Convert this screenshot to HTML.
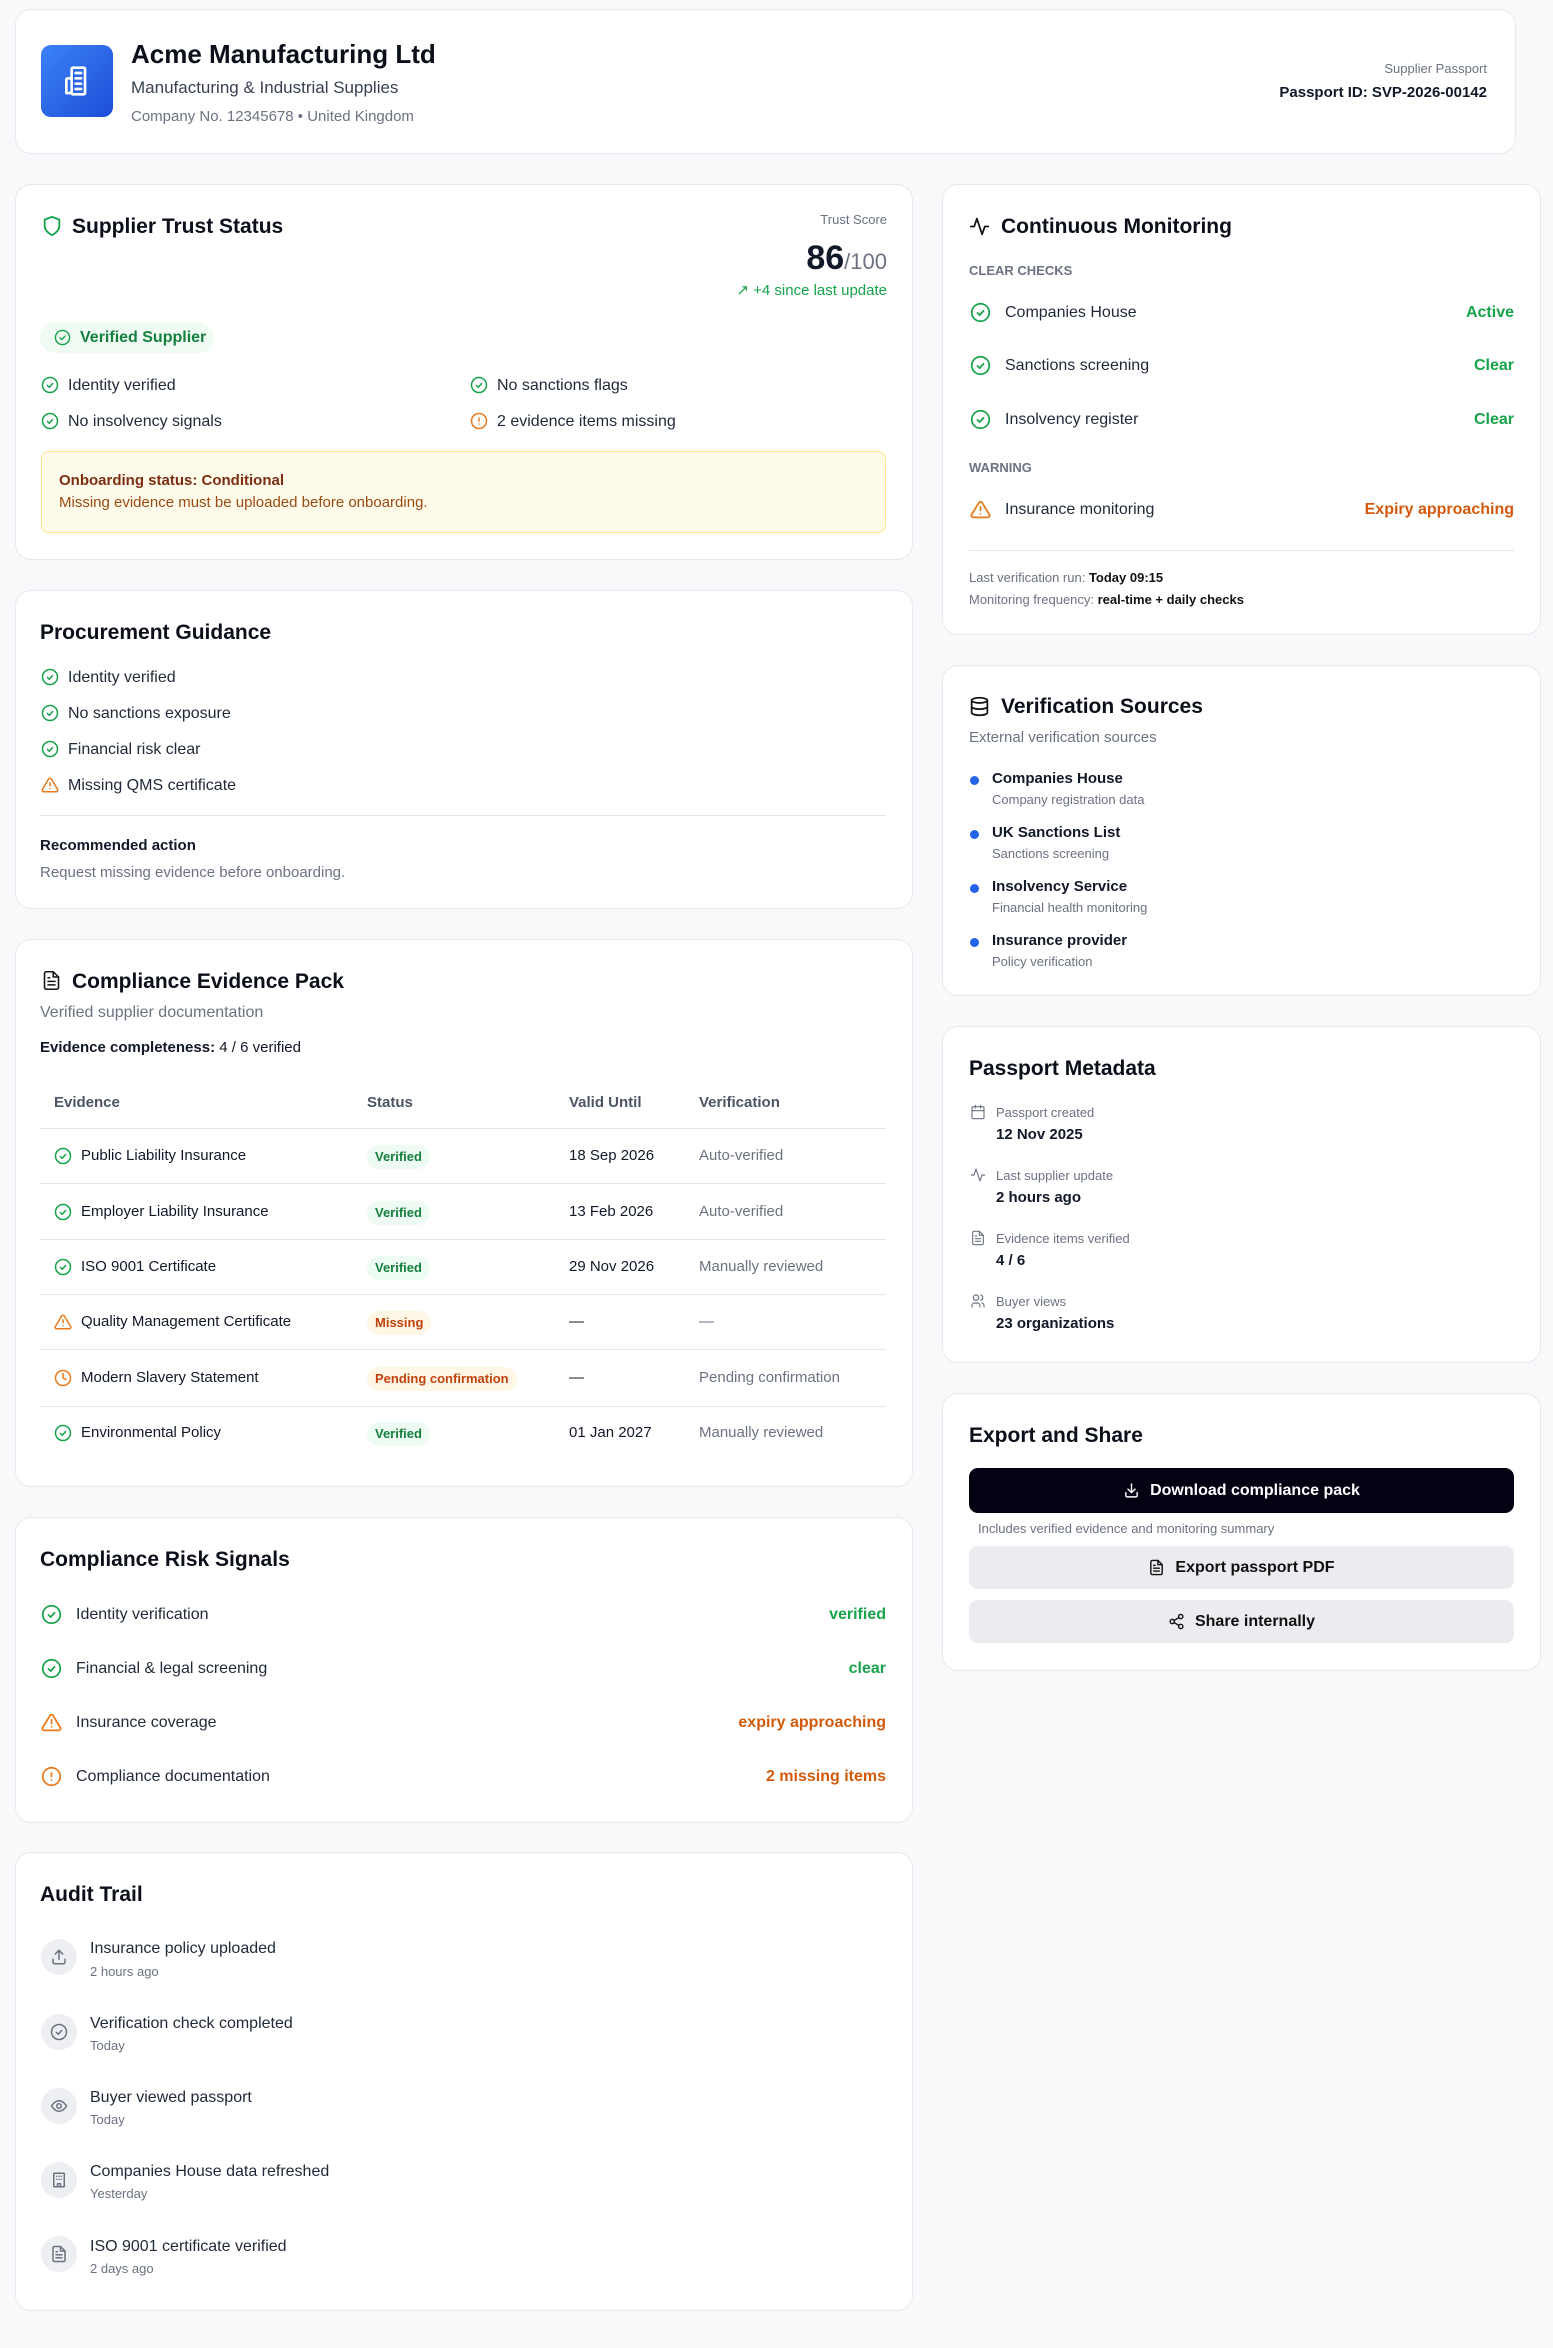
<!DOCTYPE html>
<html><head><meta charset="utf-8"><style>
*{box-sizing:border-box;margin:0;padding:0}
body{width:1553px;height:2348px;background:#f8f9fb;font-family:"Liberation Sans",sans-serif;color:#111827;position:relative;overflow:hidden}
.card{position:absolute;background:#fff;border:1px solid #e7e9ee;border-radius:16px}
.a{position:absolute;white-space:nowrap;line-height:1.2}
.h{font-size:21px;font-weight:700;color:#0b0f19}
.b{font-size:16px;color:#1f2937}
.s{font-size:13px;color:#6b7280}
.g{color:#16a34a}.o{color:#d35a0c}
.gr{color:#6b7280}
svg.i{position:absolute;fill:none;stroke-width:2;stroke-linecap:round;stroke-linejoin:round}
.badge{position:absolute;height:24px;border-radius:12px;font-size:13px;line-height:24px;padding:0 8px;font-weight:600}
.vb{background:#eefbf2;color:#15803d}.mb{background:#fff7e6;color:#c2410c}
.line{position:absolute;height:1px;background:#e5e7eb}
.dot{position:absolute;width:9px;height:9px;border-radius:50%;background:#2563eb}
.circ{position:absolute;width:36px;height:36px;border-radius:50%;background:#eeeff2}
.btn{position:absolute;left:969px;width:545px;border-radius:9px;font-size:16px;font-weight:600;display:flex;align-items:center;justify-content:center;gap:10px}
</style></head><body>
<svg width="0" height="0" style="position:absolute"><defs>
<symbol id="ck" viewBox="0 0 24 24"><circle cx="12" cy="12" r="10"/><path d="M8.5 12.5l2.5 2.5 4.5-5"/></symbol>
<symbol id="warn" viewBox="0 0 24 24"><path d="M10.3 3.9L1.8 18a2 2 0 001.7 3h17a2 2 0 001.7-3L13.7 3.9a2 2 0 00-3.4 0z"/><path d="M12 9v4M12 17h.01"/></symbol>
<symbol id="alert" viewBox="0 0 24 24"><circle cx="12" cy="12" r="10"/><path d="M12 8v4M12 16h.01"/></symbol>
<symbol id="clock" viewBox="0 0 24 24"><circle cx="12" cy="12" r="10"/><path d="M12 6v6l4 2"/></symbol>
<symbol id="doc" viewBox="0 0 24 24"><path d="M14 2H6a2 2 0 00-2 2v16a2 2 0 002 2h12a2 2 0 002-2V8z"/><path d="M14 2v6h6M16 13H8M16 17H8M10 9H8"/></symbol>
<symbol id="pulse" viewBox="0 0 24 24"><path d="M22 12h-4l-3 9L9 3l-3 9H2"/></symbol>
</defs></svg>

<!-- Header -->
<div class="card" style="left:15px;top:9px;width:1501px;height:145px"></div>
<div style="position:absolute;left:41px;top:45px;width:72px;height:72px;border-radius:10px;background:linear-gradient(135deg,#3b82f6,#1d4ed8)"></div>
<svg class="i" style="left:61px;top:65px;stroke:#fff;stroke-width:2" width="32" height="32" viewBox="0 0 24 24"><rect x="8" y="2" width="10" height="20" rx="1"/><path d="M8 10H5a1 1 0 00-1 1v10h4M11 6h4M11 10h4M11 14h4M11 18h4"/></svg>
<div class="a" style="left:131px;top:39px;font-size:26px;font-weight:700;color:#0b0f19">Acme Manufacturing Ltd</div>
<div class="a" style="left:131px;top:78px;font-size:17px;color:#374151">Manufacturing &amp; Industrial Supplies</div>
<div class="a" style="left:131px;top:108px;font-size:15px;color:#6b7280">Company No. 12345678 • United Kingdom</div>
<div class="a s" style="right:66px;top:61px">Supplier Passport</div>
<div class="a" style="right:66px;top:84px;font-size:15px;font-weight:700">Passport ID: SVP-2026-00142</div>

<!-- Trust -->
<div class="card" style="left:15px;top:184px;width:898px;height:376px"></div>
<svg class="i" style="left:41px;top:215px;stroke:#16a34a" width="22" height="22" viewBox="0 0 24 24"><path d="M12 22s8-4 8-10V5l-8-3-8 3v7c0 6 8 10 8 10z"/></svg>
<div class="a h" style="left:72px;top:214px">Supplier Trust Status</div>
<div class="a s" style="right:666px;top:212px">Trust Score</div>
<div class="a" style="right:666px;top:238px;font-size:34px;font-weight:700">86<span style="font-size:22px;font-weight:400;color:#6b7280">/100</span></div>
<div class="a g" style="right:666px;top:282px;font-size:15px">↗ +4 since last update</div>
<div style="position:absolute;left:40px;top:322px;width:174px;height:31px;border-radius:16px;background:#effbf3"></div>
<svg class="i" style="left:54px;top:329px;stroke:#16a34a" width="17" height="17"><use href="#ck"/></svg>
<div class="a" style="left:80px;top:328px;font-size:16px;color:#15803d;font-weight:600">Verified Supplier</div>
<svg class="i" style="left:41px;top:376px;stroke:#16a34a" width="18" height="18"><use href="#ck"/></svg>
<div class="a b" style="left:68px;top:376px">Identity verified</div>
<svg class="i" style="left:41px;top:412px;stroke:#16a34a" width="18" height="18"><use href="#ck"/></svg>
<div class="a b" style="left:68px;top:412px">No insolvency signals</div>
<svg class="i" style="left:470px;top:376px;stroke:#16a34a" width="18" height="18"><use href="#ck"/></svg>
<div class="a b" style="left:497px;top:376px">No sanctions flags</div>
<svg class="i" style="left:470px;top:412px;stroke:#ea7a1c" width="18" height="18"><use href="#alert"/></svg>
<div class="a b" style="left:497px;top:412px">2 evidence items missing</div>
<div style="position:absolute;left:41px;top:451px;width:845px;height:82px;border-radius:8px;background:#fefbea;border:1px solid #fde68a"></div>
<div class="a" style="left:59px;top:472px;font-size:15px;font-weight:700;color:#7c2d12">Onboarding status: Conditional</div>
<div class="a" style="left:59px;top:494px;font-size:15px;color:#9a4a12">Missing evidence must be uploaded before onboarding.</div>

<!-- Procurement -->
<div class="card" style="left:15px;top:590px;width:898px;height:319px"></div>
<div class="a h" style="left:40px;top:620px">Procurement Guidance</div>
<svg class="i" style="left:41px;top:668px;stroke:#16a34a" width="18" height="18"><use href="#ck"/></svg>
<div class="a b" style="left:68px;top:668px">Identity verified</div>
<svg class="i" style="left:41px;top:704px;stroke:#16a34a" width="18" height="18"><use href="#ck"/></svg>
<div class="a b" style="left:68px;top:704px">No sanctions exposure</div>
<svg class="i" style="left:41px;top:740px;stroke:#16a34a" width="18" height="18"><use href="#ck"/></svg>
<div class="a b" style="left:68px;top:740px">Financial risk clear</div>
<svg class="i" style="left:41px;top:776px;stroke:#ea7a1c" width="18" height="18"><use href="#warn"/></svg>
<div class="a b" style="left:68px;top:776px">Missing QMS certificate</div>
<div class="line" style="left:40px;top:815px;width:846px"></div>
<div class="a" style="left:40px;top:837px;font-size:15px;font-weight:700">Recommended action</div>
<div class="a" style="left:40px;top:864px;font-size:15px;color:#6b7280">Request missing evidence before onboarding.</div>

<!-- Evidence -->
<div class="card" style="left:15px;top:939px;width:898px;height:548px"></div>
<svg class="i" style="left:41px;top:970px;stroke:#111;stroke-width:1.8" width="21" height="21"><use href="#doc"/></svg>
<div class="a h" style="left:72px;top:969px">Compliance Evidence Pack</div>
<div class="a" style="left:40px;top:1003px;font-size:16px;color:#6b7280">Verified supplier documentation</div>
<div class="a" style="left:40px;top:1039px;font-size:15px"><b>Evidence completeness:</b> 4 / 6 verified</div>
<div class="a" style="left:54px;top:1094px;font-size:15px;color:#4b5563;font-weight:600">Evidence</div>
<div class="a" style="left:367px;top:1094px;font-size:15px;color:#4b5563;font-weight:600">Status</div>
<div class="a" style="left:569px;top:1094px;font-size:15px;color:#4b5563;font-weight:600">Valid Until</div>
<div class="a" style="left:699px;top:1094px;font-size:15px;color:#4b5563;font-weight:600">Verification</div>
<div class="line" style="left:40px;top:1128px;width:846px"></div>
<div class="line" style="left:40px;top:1183px;width:846px"></div>
<div class="line" style="left:40px;top:1239px;width:846px"></div>
<div class="line" style="left:40px;top:1294px;width:846px"></div>
<div class="line" style="left:40px;top:1349px;width:846px"></div>
<div class="line" style="left:40px;top:1406px;width:846px"></div>

<svg class="i" style="left:54px;top:1147px;stroke:#16a34a" width="18" height="18"><use href="#ck"/></svg>
<div class="a" style="left:81px;top:1147px;font-size:15px">Public Liability Insurance</div>
<div class="badge vb" style="left:367px;top:1145px">Verified</div>
<div class="a" style="left:569px;top:1147px;font-size:15px">18 Sep 2026</div>
<div class="a gr" style="left:699px;top:1147px;font-size:15px">Auto-verified</div>

<svg class="i" style="left:54px;top:1203px;stroke:#16a34a" width="18" height="18"><use href="#ck"/></svg>
<div class="a" style="left:81px;top:1203px;font-size:15px">Employer Liability Insurance</div>
<div class="badge vb" style="left:367px;top:1201px">Verified</div>
<div class="a" style="left:569px;top:1203px;font-size:15px">13 Feb 2026</div>
<div class="a gr" style="left:699px;top:1203px;font-size:15px">Auto-verified</div>

<svg class="i" style="left:54px;top:1258px;stroke:#16a34a" width="18" height="18"><use href="#ck"/></svg>
<div class="a" style="left:81px;top:1258px;font-size:15px">ISO 9001 Certificate</div>
<div class="badge vb" style="left:367px;top:1256px">Verified</div>
<div class="a" style="left:569px;top:1258px;font-size:15px">29 Nov 2026</div>
<div class="a gr" style="left:699px;top:1258px;font-size:15px">Manually reviewed</div>

<svg class="i" style="left:54px;top:1313px;stroke:#ea7a1c" width="18" height="18"><use href="#warn"/></svg>
<div class="a" style="left:81px;top:1313px;font-size:15px">Quality Management Certificate</div>
<div class="badge mb" style="left:367px;top:1311px">Missing</div>
<div class="a" style="left:569px;top:1313px;font-size:15px">—</div>
<div class="a gr" style="left:699px;top:1313px;font-size:15px">—</div>

<svg class="i" style="left:54px;top:1369px;stroke:#ea7a1c" width="18" height="18"><use href="#clock"/></svg>
<div class="a" style="left:81px;top:1369px;font-size:15px">Modern Slavery Statement</div>
<div class="badge mb" style="left:367px;top:1367px">Pending confirmation</div>
<div class="a" style="left:569px;top:1369px;font-size:15px">—</div>
<div class="a gr" style="left:699px;top:1369px;font-size:15px">Pending confirmation</div>

<svg class="i" style="left:54px;top:1424px;stroke:#16a34a" width="18" height="18"><use href="#ck"/></svg>
<div class="a" style="left:81px;top:1424px;font-size:15px">Environmental Policy</div>
<div class="badge vb" style="left:367px;top:1422px">Verified</div>
<div class="a" style="left:569px;top:1424px;font-size:15px">01 Jan 2027</div>
<div class="a gr" style="left:699px;top:1424px;font-size:15px">Manually reviewed</div>

<!-- Risk -->
<div class="card" style="left:15px;top:1517px;width:898px;height:306px"></div>
<div class="a h" style="left:40px;top:1547px">Compliance Risk Signals</div>
<svg class="i" style="left:41px;top:1604px;stroke:#16a34a" width="21" height="21"><use href="#ck"/></svg>
<div class="a b" style="left:76px;top:1605px">Identity verification</div>
<div class="a g" style="right:667px;top:1605px;font-size:16px;font-weight:600">verified</div>
<svg class="i" style="left:41px;top:1658px;stroke:#16a34a" width="21" height="21"><use href="#ck"/></svg>
<div class="a b" style="left:76px;top:1659px">Financial &amp; legal screening</div>
<div class="a g" style="right:667px;top:1659px;font-size:16px;font-weight:600">clear</div>
<svg class="i" style="left:41px;top:1712px;stroke:#ea7a1c" width="21" height="21"><use href="#warn"/></svg>
<div class="a b" style="left:76px;top:1713px">Insurance coverage</div>
<div class="a o" style="right:667px;top:1713px;font-size:16px;font-weight:600">expiry approaching</div>
<svg class="i" style="left:41px;top:1766px;stroke:#ea7a1c" width="21" height="21"><use href="#alert"/></svg>
<div class="a b" style="left:76px;top:1767px">Compliance documentation</div>
<div class="a o" style="right:667px;top:1767px;font-size:16px;font-weight:600">2 missing items</div>

<!-- Audit -->
<div class="card" style="left:15px;top:1852px;width:898px;height:459px"></div>
<div class="a h" style="left:40px;top:1882px">Audit Trail</div>
<div class="circ" style="left:41px;top:1939px"></div>
<svg class="i" style="left:50px;top:1948px;stroke:#6b7280" width="18" height="18" viewBox="0 0 24 24"><path d="M4 15v4a2 2 0 002 2h12a2 2 0 002-2v-4M12 3v12M7 8l5-5 5 5"/></svg>
<div class="a b" style="left:90px;top:1939px">Insurance policy uploaded</div>
<div class="a s" style="left:90px;top:1964px">2 hours ago</div>
<div class="circ" style="left:41px;top:2014px"></div>
<svg class="i" style="left:50px;top:2023px;stroke:#6b7280" width="18" height="18"><use href="#ck"/></svg>
<div class="a b" style="left:90px;top:2014px">Verification check completed</div>
<div class="a s" style="left:90px;top:2038px">Today</div>
<div class="circ" style="left:41px;top:2088px"></div>
<svg class="i" style="left:50px;top:2097px;stroke:#6b7280" width="18" height="18" viewBox="0 0 24 24"><path d="M2 12s4-7 10-7 10 7 10 7-4 7-10 7S2 12 2 12z"/><circle cx="12" cy="12" r="3"/></svg>
<div class="a b" style="left:90px;top:2088px">Buyer viewed passport</div>
<div class="a s" style="left:90px;top:2112px">Today</div>
<div class="circ" style="left:41px;top:2162px"></div>
<svg class="i" style="left:50px;top:2171px;stroke:#6b7280" width="18" height="18" viewBox="0 0 24 24"><rect x="5" y="3" width="14" height="18" rx="1"/><path d="M9 7h.01M12 7h.01M15 7h.01M9 11h.01M12 11h.01M15 11h.01M10 21v-4h4v4"/></svg>
<div class="a b" style="left:90px;top:2162px">Companies House data refreshed</div>
<div class="a s" style="left:90px;top:2186px">Yesterday</div>
<div class="circ" style="left:41px;top:2236px"></div>
<svg class="i" style="left:50px;top:2245px;stroke:#6b7280" width="18" height="18"><use href="#doc"/></svg>
<div class="a b" style="left:90px;top:2237px">ISO 9001 certificate verified</div>
<div class="a s" style="left:90px;top:2261px">2 days ago</div>

<!-- Monitoring -->
<div class="card" style="left:942px;top:184px;width:599px;height:451px"></div>
<svg class="i" style="left:969px;top:216px;stroke:#111" width="21" height="21"><use href="#pulse"/></svg>
<div class="a h" style="left:1001px;top:214px">Continuous Monitoring</div>
<div class="a" style="left:969px;top:263px;font-size:13px;font-weight:600;color:#6b7280">CLEAR CHECKS</div>
<svg class="i" style="left:970px;top:302px;stroke:#16a34a" width="21" height="21"><use href="#ck"/></svg>
<div class="a b" style="left:1005px;top:303px">Companies House</div>
<div class="a g" style="right:39px;top:303px;font-size:16px;font-weight:600">Active</div>
<svg class="i" style="left:970px;top:355px;stroke:#16a34a" width="21" height="21"><use href="#ck"/></svg>
<div class="a b" style="left:1005px;top:356px">Sanctions screening</div>
<div class="a g" style="right:39px;top:356px;font-size:16px;font-weight:600">Clear</div>
<svg class="i" style="left:970px;top:409px;stroke:#16a34a" width="21" height="21"><use href="#ck"/></svg>
<div class="a b" style="left:1005px;top:410px">Insolvency register</div>
<div class="a g" style="right:39px;top:410px;font-size:16px;font-weight:600">Clear</div>
<div class="a" style="left:969px;top:460px;font-size:13px;font-weight:600;color:#6b7280">WARNING</div>
<svg class="i" style="left:970px;top:499px;stroke:#ea7a1c" width="21" height="21"><use href="#warn"/></svg>
<div class="a b" style="left:1005px;top:500px">Insurance monitoring</div>
<div class="a o" style="right:39px;top:500px;font-size:16px;font-weight:600">Expiry approaching</div>
<div class="line" style="left:969px;top:550px;width:545px"></div>
<div class="a s" style="left:969px;top:570px">Last verification run: <b style="color:#111">Today 09:15</b></div>
<div class="a s" style="left:969px;top:592px">Monitoring frequency: <b style="color:#111">real-time + daily checks</b></div>

<!-- Sources -->
<div class="card" style="left:942px;top:665px;width:599px;height:331px"></div>
<svg class="i" style="left:969px;top:696px;stroke:#111" width="21" height="21" viewBox="0 0 24 24"><ellipse cx="12" cy="5" rx="9" ry="3"/><path d="M3 5v14c0 1.7 4 3 9 3s9-1.3 9-3V5M3 12c0 1.7 4 3 9 3s9-1.3 9-3"/></svg>
<div class="a h" style="left:1001px;top:694px">Verification Sources</div>
<div class="a" style="left:969px;top:729px;font-size:15px;color:#6b7280">External verification sources</div>
<div class="dot" style="left:970px;top:776px"></div>
<div class="a" style="left:992px;top:770px;font-size:15px;font-weight:600">Companies House</div>
<div class="a s" style="left:992px;top:792px">Company registration data</div>
<div class="dot" style="left:970px;top:830px"></div>
<div class="a" style="left:992px;top:824px;font-size:15px;font-weight:600">UK Sanctions List</div>
<div class="a s" style="left:992px;top:846px">Sanctions screening</div>
<div class="dot" style="left:970px;top:884px"></div>
<div class="a" style="left:992px;top:878px;font-size:15px;font-weight:600">Insolvency Service</div>
<div class="a s" style="left:992px;top:900px">Financial health monitoring</div>
<div class="dot" style="left:970px;top:938px"></div>
<div class="a" style="left:992px;top:932px;font-size:15px;font-weight:600">Insurance provider</div>
<div class="a s" style="left:992px;top:954px">Policy verification</div>

<!-- Metadata -->
<div class="card" style="left:942px;top:1026px;width:599px;height:337px"></div>
<div class="a h" style="left:969px;top:1056px">Passport Metadata</div>
<svg class="i" style="left:970px;top:1104px;stroke:#6b7280;stroke-width:1.7" width="16" height="16" viewBox="0 0 24 24"><rect x="3" y="4" width="18" height="18" rx="2"/><path d="M16 2v4M8 2v4M3 10h18"/></svg>
<div class="a s" style="left:996px;top:1105px">Passport created</div>
<div class="a" style="left:996px;top:1126px;font-size:15px;font-weight:700">12 Nov 2025</div>
<svg class="i" style="left:970px;top:1167px;stroke:#6b7280;stroke-width:1.7" width="16" height="16"><use href="#pulse"/></svg>
<div class="a s" style="left:996px;top:1168px">Last supplier update</div>
<div class="a" style="left:996px;top:1189px;font-size:15px;font-weight:700">2 hours ago</div>
<svg class="i" style="left:970px;top:1230px;stroke:#6b7280;stroke-width:1.7" width="16" height="16"><use href="#doc"/></svg>
<div class="a s" style="left:996px;top:1231px">Evidence items verified</div>
<div class="a" style="left:996px;top:1252px;font-size:15px;font-weight:700">4 / 6</div>
<svg class="i" style="left:970px;top:1293px;stroke:#6b7280;stroke-width:1.7" width="16" height="16" viewBox="0 0 24 24"><circle cx="9" cy="7" r="4"/><path d="M3 21v-2a4 4 0 014-4h4a4 4 0 014 4v2M16 3.1a4 4 0 010 7.8M21 21v-2a4 4 0 00-3-3.9"/></svg>
<div class="a s" style="left:996px;top:1294px">Buyer views</div>
<div class="a" style="left:996px;top:1315px;font-size:15px;font-weight:700">23 organizations</div>

<!-- Export -->
<div class="card" style="left:942px;top:1393px;width:599px;height:278px"></div>
<div class="a h" style="left:969px;top:1423px">Export and Share</div>
<div class="btn" style="top:1468px;height:45px;background:#030213;color:#fff">
<svg width="17" height="17" viewBox="0 0 24 24" fill="none" stroke="#fff" stroke-width="2" stroke-linecap="round" stroke-linejoin="round"><path d="M4 15v4a2 2 0 002 2h12a2 2 0 002-2v-4M12 3v12M7 10l5 5 5-5"/></svg>Download compliance pack</div>
<div class="a s" style="left:978px;top:1521px">Includes verified evidence and monitoring summary</div>
<div class="btn" style="top:1546px;height:43px;background:#ececf0;color:#111">
<svg width="17" height="17" viewBox="0 0 24 24" fill="none" stroke="#111" stroke-width="2" stroke-linecap="round" stroke-linejoin="round"><use href="#doc"/></svg>Export passport PDF</div>
<div class="btn" style="top:1600px;height:43px;background:#ececf0;color:#111">
<svg width="17" height="17" viewBox="0 0 24 24" fill="none" stroke="#111" stroke-width="2" stroke-linecap="round"><circle cx="18" cy="5" r="3"/><circle cx="6" cy="12" r="3"/><circle cx="18" cy="19" r="3"/><path d="M8.6 13.5l6.8 4M15.4 6.5l-6.8 4"/></svg>Share internally</div>
</body></html>
